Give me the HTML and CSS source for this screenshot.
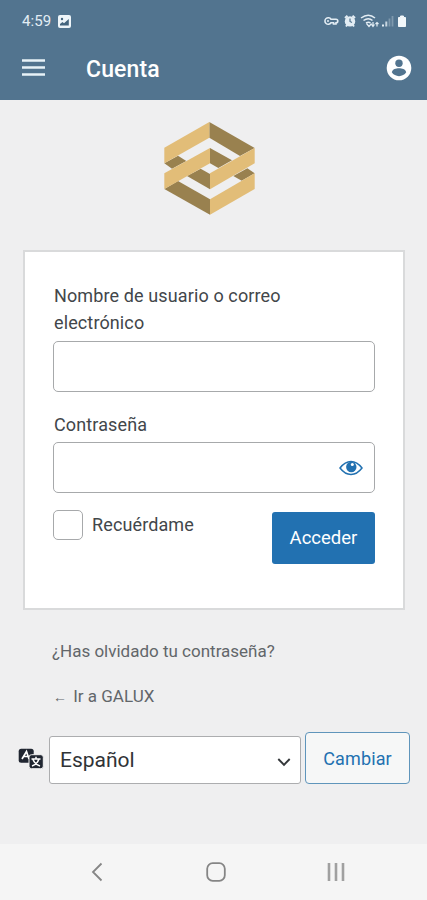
FILE: index.html
```html
<!DOCTYPE html>
<html lang="es">
<head>
<meta charset="utf-8">
<meta name="viewport" content="width=device-width, initial-scale=1">
<title>Cuenta</title>
<link rel="stylesheet" href="styles.css">
</head>
<body>
<header class="header">
  <div class="status">
    <span class="time">4:59</span>
    <svg class="photo" width="13" height="13" viewBox="0 0 13 13"><rect width="13" height="13" rx="2" fill="#eef5f9"/><path d="M2 10.500V9l2.500-2L6 8.200 10.800 4v6.500z" fill="#44657e"/><circle cx="4" cy="4" r="1.200" fill="#44657e"/></svg>
    <svg class="signals" width="86" height="16" viewBox="0 0 86 16" fill="none" stroke="#e3edf4">
      <path d="M8 6.200A3.300 3.300 0 1 0 8 9.800H10.500V11H13V9.800A1.800 1.800 0 0 0 13 6.200Z" stroke-width="1.600"/><circle cx="5" cy="8" r="1" fill="#e3edf4" stroke="none"/>
      <g transform="translate(21 2)"><path d="M1 3 3.500 .8M11 3 8.500 .8M2 11.500l1.500-2M10 11.500 8.500 9.500" stroke-width="2"/><circle cx="6" cy="6.400" r="5.200" fill="#e3edf4" stroke="none"/><path d="M6 3.500V6.500L8 7.500" stroke="#52748f" stroke-width="1.200"/></g>
      <path d="M38 5Q45.500 -.5 52 5M40.500 7.500Q45.500 4 49.500 7.500M43 10Q45.500 8.500 47.500 10" stroke-width="1.500"/><path d="M43.500 10.500 46 13.500 48.500 10.500M50 9v4.500M48.500 11.500l1.500 2 1.500-2M54 13.500v-4M52.500 11l1.500-1.500 1.500 1.500" stroke-width="1.200"/>
      <path d="M60 13.500V11.500" stroke-width="2"/><path d="M63.300 13.500V8.500" stroke-width="2" opacity=".8"/><path d="M66.500 13.500V5.500M69.500 13.500V3" stroke-width="1.800" opacity=".3"/>
      <path d="M75.500 4.500h2V3h3v1.500h2V13.500h-7z" fill="#f2f7fa" stroke="#f2f7fa"/>
    </svg>
  </div>
  <div class="appbar">
    <svg width="23" height="18" viewBox="0 0 23 18"><path d="M0 1.500H23M0 8.500H23M0 15.500H23" stroke="#e8f2f8" stroke-width="2.700"/></svg>
    <h1>Cuenta</h1>
    <svg class="account" width="26" height="26" viewBox="0 0 26 26"><circle cx="13" cy="13" r="12.300" fill="#fff"/><circle cx="13" cy="8.200" r="3.700" fill="#52748f"/><path d="M5.800 17.200C6.500 14 10 13.200 13 13.200S19.500 14 20.200 17.200A8.500 8.500 0 0 1 5.800 17.200Z" fill="#52748f"/></svg>
  </div>
</header>
<main>
  <svg class="logo" width="120" height="120" viewBox="0 0 360 360">
    <g fill="#99814f"><path d="M178 36 314 114 270 138 178 83Z"/><path d="M180 114 246 151 205 174 180 160Z"/><path d="M43 160 84 137 109 153 66 176Z"/><path d="M111 198 152 176 180 192V238Z"/><path d="M250 198 292 175 314 190 275 212Z"/><path d="M43 237 84 213 180 268V314Z"/></g>
    <g fill="#e2bd78"><path d="M43 113 178 36V83L43 160Z"/><path d="M43 190 180 114V160L43 237Z"/><path d="M314 114V160L180 238V190Z"/><path d="M180 268 314 190V237L180 314Z"/></g>
  </svg>
  <form class="card">
    <label class="label" for="user">Nombre de usuario o correo<br>electrónico</label>
    <input class="field" id="user" type="text">
    <label class="label pass-label" for="pass">Contraseña</label>
    <div class="password">
      <input class="field" id="pass" type="password">
      <svg class="eye" width="24" height="16" viewBox="0 0 24 16"><path d="M1 8Q6 1.500 12 1.500T23 8Q18 14.500 12 14.500T1 8Z" fill="#fff" stroke="#2271b1" stroke-width="1.500"/><circle cx="12.300" cy="7" r="5.200" fill="#2271b1"/><circle cx="13.300" cy="4.500" r="1.500" fill="#fff"/></svg>
    </div>
    <div class="actions">
      <input class="check" id="remember" type="checkbox">
      <label class="remember" for="remember">Recuérdame</label>
      <button class="submit" type="button">Acceder</button>
    </div>
  </form>
  <nav class="links"><a class="forgot">¿Has olvidado tu contraseña?</a><a class="back"><span class="arrow">←</span> Ir a GALUX</a></nav>
  <div class="language">
    <svg class="translate" width="26" height="22" viewBox="0 0 26 22"><rect x=".7" y=".7" width="15" height="14" rx="2.500" fill="#202631"/><path d="M4 11 8.500 3.500 11 11M5.500 8.500H11" fill="none" stroke="#fff" stroke-width="1.700"/><rect x="11" y="6.700" width="14.300" height="14" rx="2.500" fill="#202631" stroke="#f0f0f0"/><path d="M13.500 11H22.500M18 8.800V11M21 11Q19 16.500 14 18M15 11.500Q17 16.500 22 18" fill="none" stroke="#fff" stroke-width="1.500"/></svg>
    <div class="select"><span>Español</span><svg width="14" height="10" viewBox="0 0 14 10"><path d="M1.300 2 7 7.800 12.700 2" fill="none" stroke="#34373a" stroke-width="1.900"/></svg></div>
    <button class="change" type="button">Cambiar</button>
  </div>
</main>
<footer class="navbar">
  <svg width="12" height="20" viewBox="0 0 12 20"><path d="M10.500 1.500 2 10 10.500 18.500" fill="none" stroke="#858585" stroke-width="1.800"/></svg>
  <svg class="home" width="20" height="20" viewBox="0 0 20 20"><rect x="1.200" y="1.200" width="17.600" height="17.600" rx="5.500" fill="none" stroke="#858585" stroke-width="1.800"/></svg>
  <svg width="20" height="20" viewBox="0 0 20 20"><path d="M3 1V19M10 1V19M17 1V19" stroke="#a0a0a0" stroke-width="2.600"/></svg>
</footer>
</body>
</html>
```
FILE: styles.css
```css
* { box-sizing: border-box; }
body { margin: 0; width: 427px; height: 900px; display: flex; flex-direction: column; overflow: hidden; background: #efeff0; font-family: Roboto, sans-serif; color: #42464a; }
button, input { font-family: inherit; margin: 0; }
.header { height: 100px; background: #52748f; color: #fff; }
.status { height: 42px; padding: 0 18px 0 22px; display: flex; align-items: center; }
.time { width: 36px; font-size: 15px; letter-spacing: .1px; color: #e3edf4; }
.signals { margin-left: auto; }
.appbar { display: flex; align-items: center; height: 51px; padding: 0 15px 0 22px; }
h1 { margin: 4px 0 0 41px; font-size: 23px; line-height: 28px; font-weight: 500; letter-spacing: .15px; }
.account { margin-left: auto; }
main { flex: 1; }
.logo { display: block; margin: 10px 0 0 150px; }
.card { margin: 20px 22px 0 23px; height: 360px; border: 2px solid #d9dadb; background: #fff; padding: 30px 28px 0 28px; }
.label { display: block; padding-left: 1px; font-size: 18px; line-height: 27px; letter-spacing: .12px; }
.field { display: block; width: 100%; height: 51px; border: 1px solid #a7a9ab; border-radius: 5px; background: #fff; margin-top: 5px; }
.pass-label { margin-top: 19px; }
.password { position: relative; }
.password .field { margin-top: 4px; }
.eye { position: absolute; right: 12px; top: 18px; }
.actions { display: flex; margin-top: 18px; }
.check { appearance: none; width: 30px; height: 30px; border: 1px solid #a7a9ab; border-radius: 5px; background: #fff; margin-top: -1px; }
.remember { margin-left: 9px; font-size: 18px; line-height: 28px; letter-spacing: .12px; }
.submit { margin: 1px 0 0 auto; width: 103px; height: 52px; border: 0; border-radius: 3px; background: #2271b1; color: #fff; font-size: 18.500px; letter-spacing: 0; padding: 0; }
.links { display: flex; flex-direction: column; gap: 17px; margin: 27px 0 0 52px; font-size: 17px; line-height: 28px; letter-spacing: 0; color: #62666a; }
.back { padding-left: 1px; }
.arrow { display: inline-block; width: 16px; font-size: 14px; }
.language { display: flex; margin: 21px 17px 0 18px; }
.translate { margin-top: 16px; }
.select { width: 252px; height: 48px; margin: 4px 0 0 5px; padding: 0 9px 0 10px; border: 1px solid #acadaf; border-radius: 3px; background: #fff; display: flex; align-items: center; justify-content: space-between; font-size: 21px; letter-spacing: 0; }
.select span { color: #303336; }
.select svg { margin-top: 3px; }
.change { width: 105px; height: 52px; margin-left: 4px; border: 1px solid #5f95bb; border-radius: 4px; background: #f6f7f7; color: #2271b1; font-size: 18px; letter-spacing: .15px; padding: 0; }
.navbar { height: 56px; background: #f5f5f5; display: flex; align-items: center; justify-content: space-between; padding: 0 81px 0 91px; }
.home { margin-left: 3px; }
```
